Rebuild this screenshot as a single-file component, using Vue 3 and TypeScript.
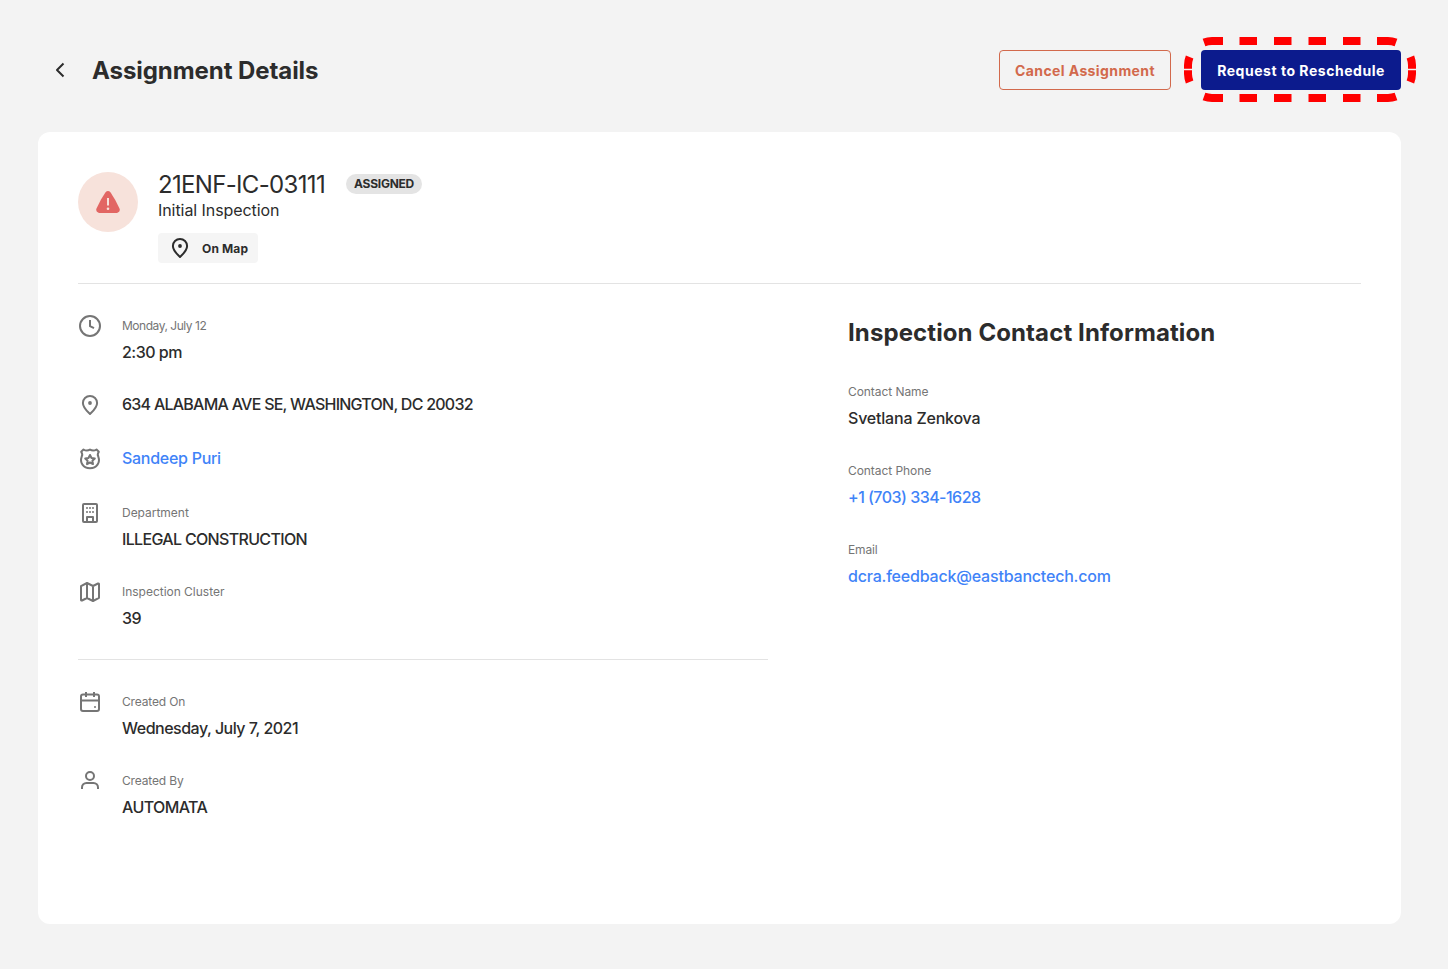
<script setup lang="ts">
interface Item {
  icon: string
  label?: string
  value: string
  link?: boolean
  name: string
}

const schedule: Item[] = [
  { icon: 'clock', label: 'Monday, July 12', value: '2:30 pm', name: 'time' },
  { icon: 'pin', value: '634 ALABAMA AVE SE, WASHINGTON, DC 20032', name: 'address' },
  { icon: 'badge', value: 'Sandeep Puri', link: true, name: 'inspector' },
  { icon: 'building', label: 'Department', value: 'ILLEGAL CONSTRUCTION', name: 'department' },
  { icon: 'map', label: 'Inspection Cluster', value: '39', name: 'cluster' },
]

const created: Item[] = [
  { icon: 'calendar', label: 'Created On', value: 'Wednesday, July 7, 2021', name: 'created-on' },
  { icon: 'user', label: 'Created By', value: 'AUTOMATA', name: 'created-by' },
]

const groups: Item[][] = [schedule, created]

const contacts = [
  { label: 'Contact Name', value: 'Svetlana Zenkova', link: false, name: 'contact-name' },
  { label: 'Contact Phone', value: '+1 (703) 334-1628', link: true, name: 'contact-phone' },
  { label: 'Email', value: 'dcra.feedback@eastbanctech.com', link: true, name: 'contact-email' },
]
</script>

<template>
  <main class="page">
    <header class="topbar">
      <svg class="back" viewBox="0 0 24 24"><path d="M15.5 5.5 9 12l6.5 6.5" /></svg>
      <h1><span>Assignment Details</span></h1>
      <button class="btn cancel"><span>Cancel Assignment</span></button>
      <div class="highlight">
        <button class="btn primary"><span>Request to Reschedule</span></button>
        <svg class="dashes" viewBox="0 0 232 65">
          <path d="M39 4H28A24 24 0 0 0 20 5.4M55.5 4H73M90 4h17.5M124.500 4H142M159 4h17.500M193 4h11A24 24 0 0 1 212 5.400" />
          <path d="M39 61H28A24 24 0 0 1 20 59.600M55.500 61H73M90 61h17.500M124.500 61H142M159 61h17.500M193 61h11A24 24 0 0 0 212 59.600" />
          <path d="M4 31.800V28A24 24 0 0 1 5.600 20M4 33.200V37A24 24 0 0 0 5.600 45M228 31.800V28A24 24 0 0 0 226.400 20M228 33.200V37A24 24 0 0 1 226.400 45" />
        </svg>
      </div>
    </header>

    <section class="card">
      <div class="summary">
        <div class="alert">
          <svg viewBox="0 0 24 22">
            <path class="tri" d="M9.400 1.500Q12-1.400 14.600 1.500Q19.500 8.500 23.500 17.500Q24.800 21 21 22H3Q-.8 21 .5 17.500Q4.500 8.500 9.400 1.500Z" />
            <path class="mark" d="M12 7v7.500" />
            <circle class="dot" cx="12" cy="17.700" r="1.300" />
          </svg>
        </div>
        <div class="summary-text">
          <div class="id-row">
            <h2><span>21ENF-IC-03111</span></h2>
            <span class="tag"><span>ASSIGNED</span></span>
          </div>
          <p class="kind"><span>Initial Inspection</span></p>
          <button class="on-map">
            <svg viewBox="0 0 24 24">
              <path d="M12 21C9.500 18.500 4.900 14.700 4.900 10a7.100 7.100 0 0 1 14.200 0c0 4.700-4.600 8.500-7.100 11Z" />
              <circle class="solid" cx="12" cy="10" r="1.900" />
            </svg>
            <span class="on-map-text">On Map</span>
          </button>
        </div>
      </div>

      <div class="columns">
        <div class="left">
          <ul v-for="(group, g) in groups" :key="g" class="list">
            <li v-for="item in group" :key="item.name" :class="['item', item.name]">
              <svg class="icon" viewBox="0 0 24 24">
                <template v-if="item.icon === 'clock'">
                  <circle cx="12" cy="12" r="10" />
                  <path d="M12 6v6.200l4 2" />
                </template>
                <template v-else-if="item.icon === 'pin'">
                  <path d="M12 21C9.500 18.500 4.900 14.700 4.900 10a7.100 7.100 0 0 1 14.200 0c0 4.700-4.600 8.500-7.100 11Z" />
                  <circle class="solid" cx="12" cy="10" r="1.900" />
                </template>
                <template v-else-if="item.icon === 'badge'">
                  <path d="M5.500 2.500Q8.700 4.600 12 2.600Q15.300 4.600 18.500 2.500L20.800 4.800Q19 7.200 20.300 9.600C22.500 15.500 18.800 21.300 12 21.300S1.500 15.500 3.700 9.600Q5 7.200 3.200 4.800Z" />
                  <path d="m12 8 1.500 3 3.300.500-2.400 2.300.600 3.300-3-1.600-3 1.600.600-3.300-2.400-2.300 3.300-.500Z" />
                </template>
                <template v-else-if="item.icon === 'building'">
                  <rect x="5" y="3" width="14" height="18" rx="1" />
                  <path d="M9 21v-5h6v5" />
                  <path class="windows" d="M8 7h2M11 7h2M14 7h2M8 11h2M11 11h2M14 11h2" />
                </template>
                <template v-else-if="item.icon === 'map'">
                  <path d="M3 6.200 9 3l6 3 5-2.500q1-.3 1 .7V17.800L15 21l-6-3-5 2.500q-1 .3-1-.7ZM9 3v15M15 6v15" />
                </template>
                <template v-else-if="item.icon === 'calendar'">
                  <rect x="3" y="4.500" width="18" height="16.500" rx="2" />
                  <path d="M3 10.500h18M8 2v5M16 2v5" />
                  <circle class="solid" cx="17" cy="17" r="1" />
                </template>
                <template v-else>
                  <circle cx="12" cy="7" r="4" />
                  <path d="M4 20v-1.500a4.500 4.500 0 0 1 4.500-4.500h7a4.500 4.500 0 0 1 4.500 4.500V20" />
                </template>
              </svg>
              <div class="body">
                <div v-if="item.label" class="label"><span>{{ item.label }}</span></div>
                <div :class="['value', { link: item.link }]"><span>{{ item.value }}</span></div>
              </div>
            </li>
          </ul>
        </div>

        <div class="right">
          <h3><span>Inspection Contact Information</span></h3>
          <div v-for="c in contacts" :key="c.name" :class="['contact', c.name]">
            <div class="label"><span>{{ c.label }}</span></div>
            <div :class="['value', { link: c.link }]"><span>{{ c.value }}</span></div>
          </div>
        </div>
      </div>
    </section>
  </main>
</template>

<style>
body {
  margin: 0;
  background: #f3f3f3;
}
</style>

<style scoped>
* {
  box-sizing: border-box;
}
.page {
  height: 969px;
  padding: 50px 47px 45px 38px;
  background: #f3f3f3;
  color: #2c2c2c;
  font-family: Inter, 'Liberation Sans', sans-serif;
  white-space: nowrap;
}
h1, h2, h3, p, ul {
  margin: 0;
  padding: 0;
}
svg {
  fill: none;
  stroke: currentColor;
  stroke-width: 2;
  stroke-linejoin: round;
  flex: none;
}
.solid {
  fill: currentColor;
  stroke: none;
}
.topbar {
  display: flex;
  align-items: center;
  height: 40px;
  margin-bottom: 42px;
}
.back {
  width: 24px;
  height: 24px;
  margin: 0 20px 0 10px;
}
h1 {
  flex: 1;
  padding-top: 2px;
  font-size: 24px;
  line-height: 32px;
  font-weight: 700;
  letter-spacing: -0.07px;
}
.btn {
  height: 40px;
  padding: 2px 0 0;
  border-radius: 4px;
  font: 700 14px/20px Inter, sans-serif;
  white-space: nowrap;
}
.cancel {
  width: 172px;
  border: 1px solid #d2694c;
  background: transparent;
  color: #d2694c;
  letter-spacing: 0.4px;
}
.highlight {
  position: relative;
  margin-left: 30px;
}
.primary {
  display: block;
  width: 200px;
  border: 0;
  background: #0c1b8d;
  color: #fff;
  letter-spacing: 0.53px;
}
.dashes {
  position: absolute;
  left: -17px;
  top: -13px;
  width: 232px;
  height: 65px;
  color: #f00;
  stroke-width: 8;
  pointer-events: none;
}
.card {
  height: 792px;
  padding: 40px;
  border-radius: 12px;
  background: #fff;
}
.summary {
  display: flex;
  gap: 20px;
  height: 112px;
  border-bottom: 1px solid #e3e3e3;
}
.alert {
  display: grid;
  place-items: center;
  width: 60px;
  height: 60px;
  border-radius: 50%;
  background: #f7e2db;
}
.alert svg {
  width: 24px;
  height: 22px;
}
.tri {
  fill: #e26663;
  stroke: none;
}
.mark {
  stroke: #f7e2db;
  stroke-width: 2;
}
.dot {
  fill: #f7e2db;
  stroke: none;
}
.id-row {
  display: flex;
  align-items: center;
  gap: 20px;
  height: 24px;
}
h2 {
  width: 168px;
  padding-top: 2px;
  font-size: 24px;
  line-height: 24px;
  font-weight: 400;
  letter-spacing: -0.67px;
}
.tag {
  display: flex;
  align-items: center;
  justify-content: center;
  width: 76px;
  height: 20px;
  padding-bottom: 2px;
  border-radius: 10px;
  background: #e4e4e4;
  font-size: 12px;
  font-weight: 700;
  letter-spacing: -0.25px;
}
.kind {
  height: 37px;
  padding-top: 2px;
  font-size: 16px;
  line-height: 24px;
  letter-spacing: -0.07px;
}
.on-map {
  display: flex;
  align-items: center;
  gap: 10px;
  width: 100px;
  height: 30px;
  padding: 0 0 0 10px;
  border: 0;
  border-radius: 4px;
  background: #f5f5f5;
  color: #2c2c2c;
  font: 700 12px/20px Inter, sans-serif;
  letter-spacing: 0.15px;
}
.on-map svg {
  width: 24px;
  height: 24px;
}
.on-map-text {
  padding-top: 2px;
}
.columns {
  display: flex;
  gap: 80px;
}
.left {
  width: 690px;
}
.list {
  display: flex;
  flex-direction: column;
  gap: 26px;
  padding: 30px 0 26px;
  list-style: none;
}
.list + .list {
  border-top: 1px solid #e3e3e3;
}
.item {
  display: flex;
  gap: 20px;
  min-height: 28px;
}
.icon {
  width: 24px;
  height: 24px;
  color: #757575;
}
.windows {
  stroke-width: 1.6;
}
.label {
  height: 23px;
  font-size: 12px;
  line-height: 23px;
  color: #757575;
  letter-spacing: -0.15px;
}
.value {
  font-size: 16px;
  line-height: 22px;
  font-weight: 500;
  letter-spacing: -0.2px;
}
.label + .value {
  height: 30px;
  line-height: 30px;
}
.time .label {
  letter-spacing: -0.47px;
}
.time .value,
.cluster .value,
.created-on .value {
  letter-spacing: -0.5px;
}
.address .value {
  letter-spacing: -0.75px;
}
.inspector .value {
  letter-spacing: -0.28px;
}
.department .label,
.cluster .label {
  letter-spacing: -0.02px;
}
.department .value {
  letter-spacing: -0.67px;
}
.created-by .value {
  letter-spacing: -0.6px;
}
.contact-name .label,
.contact-phone .label {
  letter-spacing: -0.06px;
}
.contact-phone .value {
  letter-spacing: -0.53px;
}
.link {
  color: #3f83f8;
}
.right {
  padding-top: 33px;
}
h3 {
  height: 63px;
  font-size: 24px;
  line-height: 32px;
  font-weight: 700;
  letter-spacing: 0.1px;
}
.contact {
  height: 79px;
}
</style>
